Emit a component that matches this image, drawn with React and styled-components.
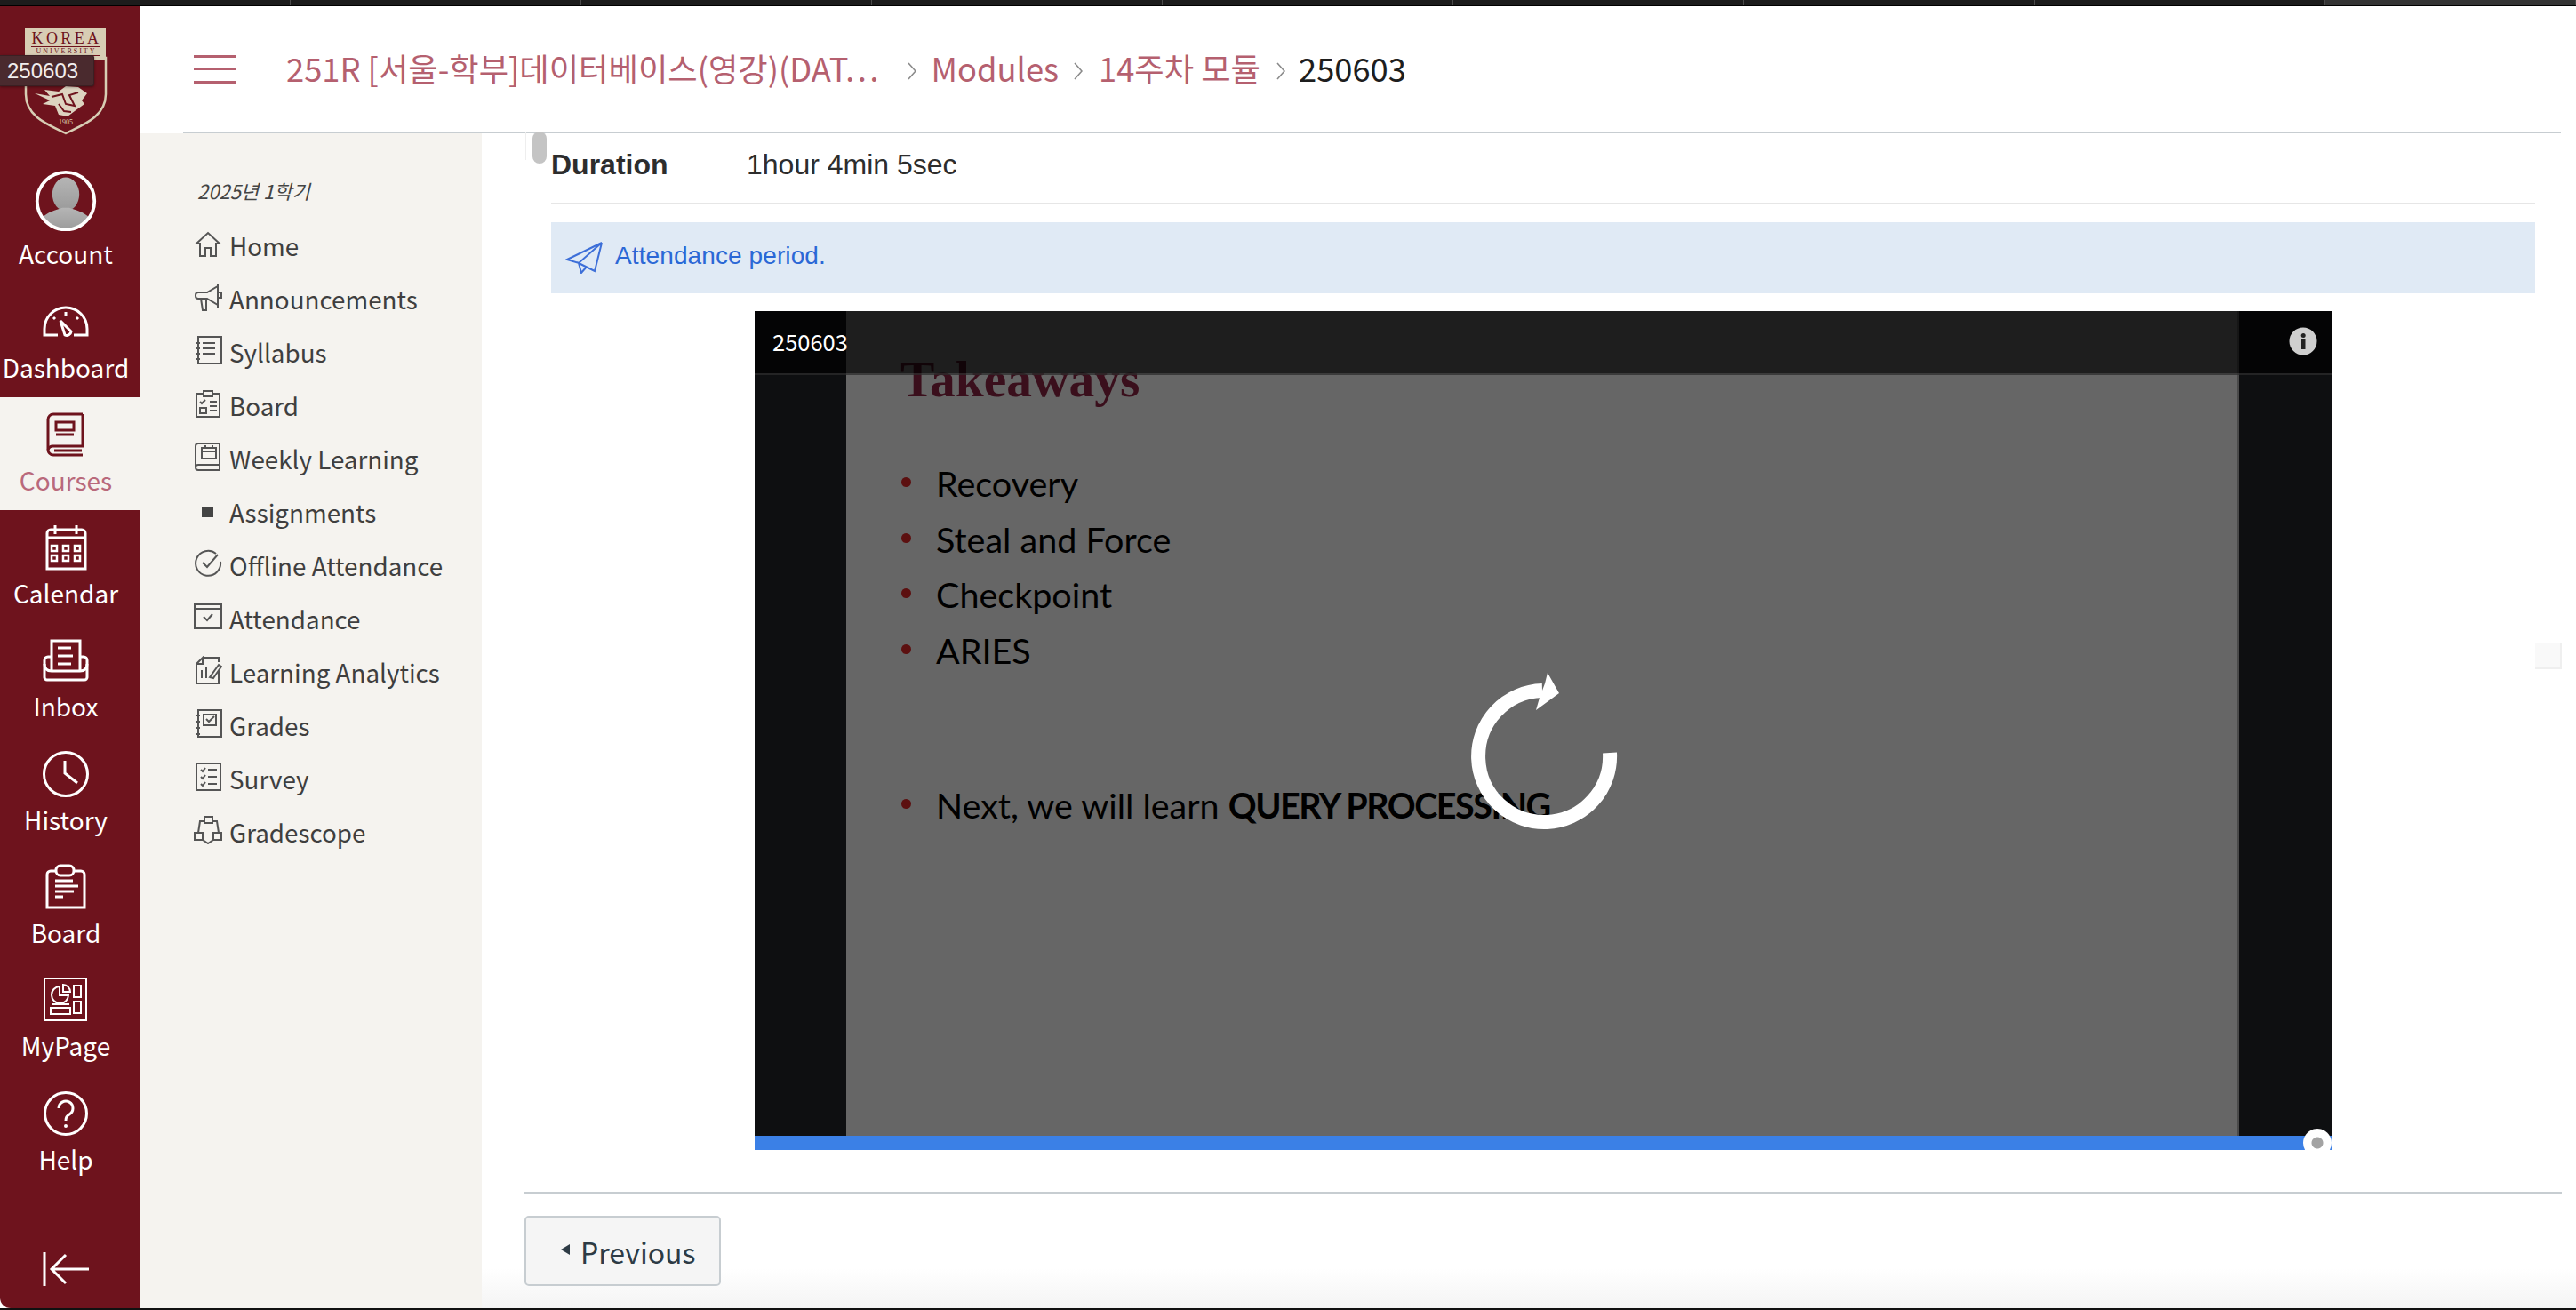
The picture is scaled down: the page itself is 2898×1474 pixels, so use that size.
import React from "react";
import styled, { createGlobalStyle } from "styled-components";

const Global = createGlobalStyle`
  html, body {
    margin: 0;
    width: 2898px;
    height: 1474px;
    overflow: hidden;
    background: #fff;
    font-family: "Noto Sans CJK KR", "Noto Sans", sans-serif;
  }
  * { box-sizing: border-box; }
`;

const Page = styled.div`
  width: 2898px;
  height: 1474px;
  display: flex;
  flex-direction: column;
  background: #111;
  overflow: hidden;
`;

const TabStrip = styled.div`
  display: flex;
  height: 7px;
  flex: none;
  border-bottom: 1px solid #000;
`;

const Tab = styled.div`
  width: 327px;
  flex: ${(p) => (p.$current ? 1 : "none")};
  background: ${(p) => (p.$current ? "#343434" : "#1c1c1c")};
  border-right: 1px solid #4a4a4a;
`;

const Body = styled.div`
  flex: 1;
  display: flex;
  min-height: 0;
  background: #fff;
`;

const GlobalNav = styled.nav`
  position: relative;
  width: 158px;
  flex: none;
  display: flex;
  flex-direction: column;
  background: #6e131d;
  border-bottom-left-radius: 12px;
`;

const LogoBox = styled.div`
  height: 185px;
  flex: none;
`;

const Tooltip = styled.div`
  position: absolute;
  left: 0;
  top: 55px;
  width: 106px;
  height: 35px;
  padding-left: 8px;
  background: #4a2a2e;
  border: 1px solid #3a2023;
  border-left: 0;
  border-radius: 0 3px 3px 0;
  color: #f0eded;
  font: 24px/33px "Liberation Sans", sans-serif;
  box-shadow: 0 1px 3px rgba(0, 0, 0, 0.4);
`;

const NavItem = styled.div`
  height: 127.300px;
  flex: none;
  display: flex;
  flex-direction: column;
  align-items: center;
  justify-content: flex-end;
  padding: 0 10px 14px 0;
  background: ${(p) => (p.$active ? "#f5f3ef" : "transparent")};
  color: ${(p) => (p.$active ? "#b9697b" : "#fff")};
`;

const NavIcon = styled.svg`
  display: block;
  margin-bottom: 5px;
  fill: none;
  stroke: ${(p) => (p.$active ? "#6e131d" : "#fff")};
  stroke-width: 3;
`;

const NavLabel = styled.span`
  font-size: 28px;
  line-height: 40px;
  white-space: nowrap;
`;

const Collapse = styled.svg`
  display: block;
  margin: auto 0 25px 48px;
  fill: none;
  stroke: #fff;
  stroke-width: 3;
`;

const Main = styled.div`
  flex: 1;
  min-width: 0;
  display: flex;
  flex-direction: column;
`;

const Header = styled.header`
  height: 143px;
  flex: none;
  margin: 0 17px 0 48px;
  padding: 0 0 3px 12px;
  display: flex;
  align-items: center;
  border-bottom: 2px solid #c7cdd1;
`;

const Burger = styled.div`
  width: 48px;
  height: 32px;
  margin: 3px 56px 0 0;
  display: flex;
  flex-direction: column;
  justify-content: space-between;
  span {
    height: 3px;
    background: #b5606f;
  }
`;

const Crumb = styled.span`
  font-size: 36.300px;
  line-height: 50px;
  white-space: nowrap;
  color: ${(p) => (p.$current ? "#1e1e1e" : "#b5606f")};
`;

const CrumbChevron = styled.svg`
  flex: none;
  margin: 8px ${(p) => p.$right}px 0 ${(p) => p.$left}px;
  fill: none;
  stroke: #8a8a8a;
  stroke-width: 1.6;
`;

const Columns = styled.div`
  flex: 1;
  min-height: 0;
  display: flex;
`;

const CourseNav = styled.aside`
  width: 384px;
  flex: none;
  padding: 46px 0 0 60px;
  background: #f5f3ef;
`;

const Term = styled.div`
  height: 36px;
  margin: 0 0 14px 4px;
  font-size: 22px;
  line-height: 36px;
  font-style: italic;
  color: #444;
`;

const CourseRow = styled.div`
  height: 60px;
  display: flex;
  align-items: center;
  color: #3f3f3f;
  font-size: 27.800px;
`;

const CourseIcon = styled.svg`
  flex: none;
  margin: -4px 8px 0 0;
  fill: none;
  stroke: #555;
  stroke-width: 2;
`;

const Content = styled.main`
  position: relative;
  flex: 1;
  min-width: 0;
  padding: 0 16px 0 48px;
  background: linear-gradient(to bottom, #fff calc(100% - 45px), #f4f4f4 100%);
`;

const ScrollThumb = styled.div`
  position: absolute;
  left: 49px;
  top: -2px;
  width: 24px;
  height: 32px;
  border-left: 1px solid #eee;
  &::after {
    content: "";
    position: absolute;
    left: 7px;
    top: 0;
    width: 16px;
    height: 36px;
    border-radius: 8px;
    background: #c4c4c4;
  }
`;

const Corner = styled.div`
  position: absolute;
  right: 16px;
  top: 573px;
  width: 30px;
  height: 30px;
  background: #f9f9f9;
  border-right: 2px solid #efefef;
  border-bottom: 2px solid #efefef;
`;

const Inner = styled.div`
  padding: 0 30px;
  height: 1193px;
  border-bottom: 2px solid #c7cdd1;
`;

const InfoRow = styled.div`
  height: 80px;
  display: flex;
  align-items: center;
  padding-bottom: 8px;
  border-bottom: 2px solid #e6e6e6;
  font: 32px "Liberation Sans", sans-serif;
  color: #2d2d2d;
  b {
    width: 220px;
  }
`;

const Notice = styled.div`
  height: 80px;
  margin: 20px 0;
  padding: 0 0 5px 16px;
  display: flex;
  align-items: center;
  gap: 14px;
  background: #e0eaf5;
  color: #2b68d6;
  font: 28px "Liberation Sans", sans-serif;
  letter-spacing: 0.1px;
`;

const NoticeIcon = styled.svg`
  margin-top: 5px;
  fill: none;
  stroke: #3d6fd8;
  stroke-width: 2;
`;

const Player = styled.div`
  position: relative;
  width: 1774px;
  height: 944px;
  margin: 0 auto;
  background: #0e0f11;
  overflow: hidden;
`;

const Slide = styled.div`
  position: absolute;
  left: 103px;
  top: 0;
  bottom: 16px;
  width: 1567px;
  padding: 47px 0 0 61px;
  background: #666;
  border-right: 2px solid #4a4a4a;
  color: #000;
  font-family: Lato, sans-serif;
`;

const SlideTitle = styled.h2`
  margin: 0 0 56px;
  height: 60px;
  font: bold 57.500px/60px "Liberation Serif", serif;
  color: #3a0f1c;
`;

const Bullets = styled.ul`
  margin: 0;
  padding: 0;
  list-style: none;
`;

const Bullet = styled.li`
  position: relative;
  height: 62.500px;
  margin-bottom: ${(p) => (p.$gap ? "112px" : 0)};
  padding-left: 40px;
  font-size: 39.500px;
  line-height: 62px;
  b {
    letter-spacing: -1.500px;
  }
  &::before {
    content: "";
    position: absolute;
    left: 1px;
    top: 24px;
    width: 11px;
    height: 11px;
    border-radius: 50%;
    background: #5c1010;
  }
`;

const TitleBar = styled.div`
  position: absolute;
  left: 0;
  right: 0;
  top: 0;
  height: 72px;
  padding: 0 0 4px 20px;
  display: flex;
  align-items: center;
  justify-content: space-between;
  background: rgba(0, 0, 0, 0.7);
  border-bottom: 2px solid rgba(255, 255, 255, 0.13);
  color: #fff;
  font-size: 25.500px;
`;

const InfoDot = styled.svg`
  margin: 2px 16px 0 0;
`;

const Spinner = styled.svg`
  position: absolute;
  left: 806px;
  top: 400px;
  fill: none;
`;

const Progress = styled.div`
  position: absolute;
  left: 0;
  right: 0;
  bottom: 0;
  height: 16px;
  background: #3b80e6;
`;

const Knob = styled.div`
  position: absolute;
  left: 1742px;
  top: 920px;
  width: 32px;
  height: 32px;
  border-radius: 50%;
  background: radial-gradient(circle, #a3a3a3 0 6px, #fff 7px);
`;

const PrevButton = styled.button`
  display: flex;
  align-items: center;
  width: 221px;
  height: 79px;
  margin-top: 25px;
  padding: 0 0 0 39px;
  border: 2px solid #c7cdd1;
  border-radius: 5px;
  background: #f5f5f5;
  color: #2d3b45;
  font-family: inherit;
  font-size: 32px;
  &::before {
    content: "";
    margin: -4px 12px 0 0;
    border-style: solid;
    border-width: 6px 10px 6px 0;
    border-color: transparent #2d3b45 transparent transparent;
  }
`;

const BottomEdge = styled.div`
  height: 2px;
  flex: none;
  background: #111;
`;

const KuLogo = () => (
  <svg width="158" height="185" viewBox="0 0 158 185">
    <path d="M29 58V99C29 125 56 134 74 143C92 134 119 125 119 99V58Z" fill="#6e131d" stroke="#d8cdb4" strokeWidth="2.500" />
    <rect x="28" y="24" width="91" height="37" fill="#d8cdb4" />
    <text x="75" y="42" textAnchor="middle" fontFamily="Liberation Serif, serif" fontSize="18" letterSpacing="3.400" fill="#6e131d">KOREA</text>
    <rect x="35" y="45" width="77" height="1" fill="#6e131d" />
    <text x="74.500" y="53" textAnchor="middle" fontFamily="Liberation Serif, serif" fontSize="8" letterSpacing="2" fill="#6e131d">UNIVERSITY</text>
    <rect x="35" y="55" width="77" height="1" fill="#6e131d" />
    <path d="M39 98L56 101L50 94L66 96L74 90L88 91L98 98L92 106L95 110L84 118L76 124L66 122L62 112L48 110L56 106Z" fill="#ddd3c0" />
    <path d="M58 102L70 99L74 110L84 112L78 100L88 97M66 110L72 118L80 119" stroke="#6e131d" strokeWidth="2" fill="none" />
    <text x="74" y="133" textAnchor="middle" fontFamily="Liberation Serif, serif" fontSize="8" fill="#d8cdb4">1905</text>
  </svg>
);

const Avatar = () => (
  <NavIcon width="72" height="72" viewBox="0 0 72 72">
    <defs>
      <linearGradient id="avatarFill" x1="0" y1="0" x2="0" y2="1">
        <stop offset="0" stopColor="#b5b5b5" />
        <stop offset="1" stopColor="#9a9a9a" />
      </linearGradient>
      <clipPath id="avatarClip">
        <circle cx="36" cy="36" r="33" />
      </clipPath>
    </defs>
    <g clipPath="url(#avatarClip)" fill="url(#avatarFill)" stroke="none">
      <ellipse cx="36" cy="28" rx="16" ry="20" />
      <path d="M8 72V56C14 49 24 47 32 44H40C48 47 58 49 64 56V72Z" />
    </g>
    <circle cx="36" cy="36" r="34" strokeWidth="4" />
  </NavIcon>
);

const navIcons = {
  Dashboard: (
    <>
      <path d="M17 41H2V34A24 24 0 0 1 50 34V41H35" />
      <path d="M20 25L32 37A5 5 0 0 1 25 41Z" />
      <path d="M26 15V19M12 21L14 23M40 21L38 23" />
    </>
  ),
  Courses: (
    <>
      <path d="M45 3H12A6 6 0 0 0 6 9V43A6 6 0 0 0 12 49H45" />
      <path d="M45 3V39H12A6 6 0 0 0 6 43" />
      <rect x="15" y="12" width="20" height="9" />
      <path d="M15 26H35M13 44H44" />
    </>
  ),
  Calendar: (
    <>
      <path d="M9 6H44A4 4 0 0 1 48 10V50H5V10A4 4 0 0 1 9 6Z" />
      <path d="M14 1V11M38 1V11M5 15H48" />
      <path
        strokeWidth="2.500"
        d="M10 24h6v6h-6zM23 24h6v6h-6zM36 24h6v6h-6zM10 35h6v6h-6zM23 35h6v6h-6zM36 35h6v6h-6z"
      />
    </>
  ),
  Inbox: (
    <>
      <path d="M10 37V4H42V37" />
      <path d="M17 12H32M17 21H34M17 30H32" />
      <path d="M10 22H6A4 4 0 0 0 2 26V45A3 3 0 0 0 5 48H47A3 3 0 0 0 50 45V26A4 4 0 0 0 46 22H42" />
      <path d="M2 30Q2 38 10 38H42Q50 38 50 30" />
    </>
  ),
  History: (
    <>
      <circle cx="26" cy="26" r="24.500" />
      <path d="M25 11V25L39 36" />
    </>
  ),
  Board: (
    <>
      <path d="M15 8H9A4 4 0 0 0 5 12V49H47V12A4 4 0 0 0 43 8H35" />
      <rect x="15" y="2" width="20" height="11" rx="5" />
      <path d="M14 19H34M14 25H40M14 31H35M14 37H23" />
    </>
  ),
  MyPage: (
    <g strokeWidth="2">
      <rect x="2" y="2" width="47" height="47" />
      <path d="M19 11A9.500 9.500 0 1 0 29 21H19Z" />
      <path d="M23 9A8 8 0 0 1 31 17H23Z" />
      <path d="M10 31H30" />
      <rect x="35" y="10" width="8" height="13" />
      <rect x="35" y="28" width="8" height="13" />
      <rect x="9" y="35" width="22" height="7" />
    </g>
  ),
  Help: (
    <>
      <circle cx="26" cy="26" r="23.500" />
      <path d="M18 20A8 8 0 1 1 30 27C27 29 26 30 26 34" />
      <circle cx="26" cy="40" r="2" fill="#fff" stroke="none" />
    </>
  ),
};

const navItems = ["Dashboard", "Courses", "Calendar", "Inbox", "History", "Board", "MyPage", "Help"];

const courseLinks = [
  {
    label: "Home",
    icon: <path d="M3 16L16 4L29 16H25V30H19V21H13V30H7V16Z" />,
  },
  {
    label: "Announcements",
    icon: (
      <>
        <path d="M5 11H15L27 4V25L15 18H5A3 3 0 0 1 2 15V14A3 3 0 0 1 5 11Z" />
        <path d="M8 18L10 31H14L14 18M27 1V28M28 11H31V17H28" />
      </>
    ),
  },
  {
    label: "Syllabus",
    icon: (
      <>
        <rect x="5" y="1" width="26" height="30" />
        <path d="M10 8H24M10 14H24M10 20H24M2 8H7M2 14H7M2 20H7M2 26H7" />
      </>
    ),
  },
  {
    label: "Board",
    icon: (
      <>
        <path d="M10 5H3V31H29V5H22" />
        <rect x="11" y="2" width="10" height="6" />
        <rect x="7" y="21" width="7" height="6" />
        <path d="M7 14L9 16L13 12M18 14H26M18 19H26M18 24H26" />
      </>
    ),
  },
  {
    label: "Weekly Learning",
    icon: (
      <>
        <path d="M29 1H5A3 3 0 0 0 2 4V28A3 3 0 0 0 5 31H29V1ZM29 25H5A3 3 0 0 0 2 28" />
        <rect x="9" y="6" width="16" height="12" />
        <path d="M9 10H25M13 3V7M21 3V7" />
      </>
    ),
  },
  {
    label: "Assignments",
    icon: <rect x="9" y="12" width="13" height="12" fill="#444" stroke="none" />,
  },
  {
    label: "Offline Attendance",
    icon: (
      <>
        <path d="M25 5A14 14 0 1 0 30 14" />
        <path d="M10 15L15 20L27 6" />
      </>
    ),
  },
  {
    label: "Attendance",
    icon: (
      <>
        <rect x="1" y="2" width="30" height="27" />
        <path d="M1 7H31M11 16L15 20L21 13" />
      </>
    ),
  },
  {
    label: "Learning Analytics",
    icon: (
      <>
        <path d="M10 2H28V7M28 17V31H3V9L10 2V9H3" />
        <path d="M9 16V25M14 13V25M18 24L28 10L31 12L22 25ZM18 24L22 25" />
      </>
    ),
  },
  {
    label: "Grades",
    icon: (
      <>
        <rect x="5" y="1" width="26" height="30" />
        <rect x="11" y="6" width="14" height="12" />
        <path d="M14 11L17 14L23 8M2 7H7M2 14H7M2 21H7M2 28H7" />
      </>
    ),
  },
  {
    label: "Survey",
    icon: (
      <>
        <rect x="3" y="1" width="27" height="30" />
        <path d="M8 8L10 10L13 6M8 16L10 18L13 14M8 24L10 26L13 22M16 8H26M16 16H26M16 24H26" />
      </>
    ),
  },
  {
    label: "Gradescope",
    icon: (
      <>
        <rect x="12" y="1" width="9" height="7" />
        <rect x="1" y="19" width="9" height="8" />
        <rect x="22" y="19" width="9" height="8" />
        <path d="M12 6H7L5 19M21 6H26L28 19M10 27L16 31L22 27" />
      </>
    ),
  },
];

const Chevron = ({ left, right }) => (
  <CrumbChevron $left={left} $right={right} width="10" height="22" viewBox="0 0 10 22">
    <path d="M1 2L9 11L1 20" />
  </CrumbChevron>
);

export default function App() {
  return (
    <Page>
      <Global />
      <TabStrip>
        {Array.from({ length: 8 }, (_, i) => (
          <Tab key={i} />
        ))}
        <Tab $current />
      </TabStrip>
      <Body>
        <GlobalNav>
          <LogoBox>
            <KuLogo />
          </LogoBox>
          <Tooltip>250603</Tooltip>
          <NavItem>
            <Avatar />
            <NavLabel>Account</NavLabel>
          </NavItem>
          {navItems.map((name) => (
            <NavItem key={name} $active={name === "Courses"}>
              <NavIcon $active={name === "Courses"} width="52" height="52" viewBox="0 0 52 52">
                {navIcons[name]}
              </NavIcon>
              <NavLabel>{name}</NavLabel>
            </NavItem>
          ))}
          <Collapse width="52" height="38" viewBox="0 0 52 38">
            <path d="M2 0V38M52 19H10M26 3L10 19L26 35" />
          </Collapse>
        </GlobalNav>
        <Main>
          <Header>
            <Burger>
              <span />
              <span />
              <span />
            </Burger>
            <Crumb>251R [서울-학부]데이터베이스(영강)(DAT…</Crumb>
            <Chevron left={32} right={17} />
            <Crumb>Modules</Crumb>
            <Chevron left={17} right={18} />
            <Crumb>14주차 모듈</Crumb>
            <Chevron left={18} right={15} />
            <Crumb $current>250603</Crumb>
          </Header>
          <Columns>
            <CourseNav>
              <Term>2025년 1학기</Term>
              {courseLinks.map((link) => (
                <CourseRow key={link.label}>
                  <CourseIcon width="32" height="32" viewBox="0 0 32 32">
                    {link.icon}
                  </CourseIcon>
                  {link.label}
                </CourseRow>
              ))}
            </CourseNav>
            <Content>
              <ScrollThumb />
              <Corner />
              <Inner>
                <InfoRow>
                  <b>Duration</b>
                  <span>1hour 4min 5sec</span>
                </InfoRow>
                <Notice>
                  <NoticeIcon width="42" height="36" viewBox="0 0 42 36">
                    <path d="M41 1L2 20L15 24L41 1ZM41 1L33 33L15 24L18 35L24 28" />
                  </NoticeIcon>
                  Attendance period.
                </Notice>
                <Player>
                  <Slide>
                    <SlideTitle>Takeaways</SlideTitle>
                    <Bullets>
                      <Bullet>Recovery</Bullet>
                      <Bullet>Steal and Force</Bullet>
                      <Bullet>Checkpoint</Bullet>
                      <Bullet $gap>ARIES</Bullet>
                      <Bullet>
                        Next, we will learn <b>QUERY PROCESSING</b>
                      </Bullet>
                    </Bullets>
                  </Slide>
                  <TitleBar>
                    250603
                    <InfoDot width="32" height="32" viewBox="0 0 32 32">
                      <circle cx="16" cy="16" r="15.500" fill="#cfcfcf" />
                      <rect x="14" y="14" width="4.500" height="11" fill="#222" />
                      <circle cx="16.200" cy="9.500" r="2.500" fill="#222" />
                    </InfoDot>
                  </TitleBar>
                  <Spinner width="190" height="195" viewBox="0 0 190 195">
                    <path d="M156 97A74 74 0 1 1 80 27" stroke="#fff" strokeWidth="16" />
                    <path d="M86 7L99 30L73 49L77 35L83 19Z" fill="#fff" />
                  </Spinner>
                  <Progress />
                  <Knob />
                </Player>
              </Inner>
              <PrevButton>Previous</PrevButton>
            </Content>
          </Columns>
        </Main>
      </Body>
      <BottomEdge />
    </Page>
  );
}
